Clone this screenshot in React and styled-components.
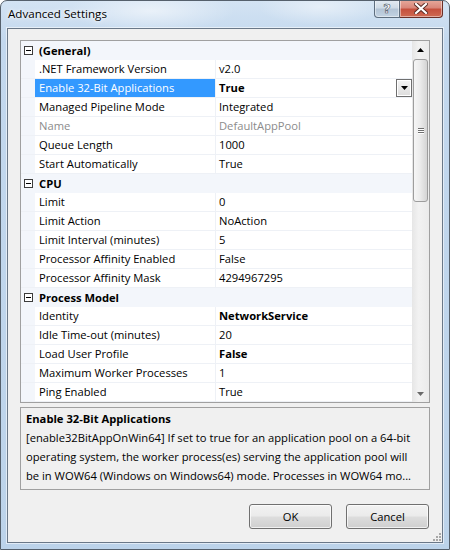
import styled, { createGlobalStyle } from 'styled-components'

const GlobalStyle = createGlobalStyle`
  html, body {
    margin: 0;
    padding: 0;
    background: #ffffff;
  }
  * {
    box-sizing: border-box;
  }
`

const FONT = `"Segoe UI", "Open Sans", "Liberation Sans", sans-serif`

const Window = styled.div`
  width: 450px;
  height: 550px;
  display: flex;
  flex-direction: column;
  border: 1px solid #55606c;
  border-radius: 7px 7px 0 0;
  padding: 0 6px 6px 6px;
  background:
    radial-gradient(ellipse 120px 30px at 150px 10px, rgba(255,255,255,0.55), rgba(255,255,255,0) 70%),
    radial-gradient(ellipse 90px 26px at 320px 6px, rgba(255,255,255,0.45), rgba(255,255,255,0) 70%),
    linear-gradient(180deg, #d3e3f3 0%, #c3d8ee 40px, #bcd3ea 100%);
  font-family: ${FONT};
  color: #000;
  overflow: hidden;
`

const TitleBar = styled.div`
  height: 27px;
  display: flex;
  justify-content: space-between;
  align-items: flex-start;
`

const Title = styled.div`
  padding: 5px 0 0 1px;
  font-size: 11.6px;
  line-height: 16px;
  text-shadow: 0 0 6px #ffffff, 0 0 3px #ffffff;
`

const CaptionButtons = styled.div`
  display: flex;
  margin-top: -1px;
`

const CaptionButton = styled.div`
  width: ${p => p.$w}px;
  height: 18px;
  display: flex;
  align-items: center;
  justify-content: center;
  border: 1px solid ${p => p.$close ? '#6b2f27' : '#5d6d7e'};
  border-top: none;
  border-left-width: ${p => p.$close ? 0 : 1}px;
  border-radius: ${p => p.$close ? '0 0 4px 0' : '0 0 0 4px'};
  background: ${p => p.$close
    ? 'linear-gradient(180deg, #e7aa9c 0%, #d9877a 45%, #c5503d 55%, #cf6a52 100%)'
    : 'linear-gradient(180deg, #e4ebf3 0%, #cfdbe7 45%, #b3c4d6 55%, #c2d2e2 100%)'};
  box-shadow: inset 0 0 0 1px rgba(255,255,255,0.45);
`

const HelpGlyph = styled.span`
  font-family: "DejaVu Sans", sans-serif;
  font-size: 13px;
  font-weight: bold;
  line-height: 1;
  color: #ffffff;
  -webkit-text-stroke: 0.6px #4a5664;
  margin-top: -1px;
`

const Client = styled.div`
  flex: 1;
  position: relative;
  display: flex;
  flex-direction: column;
  background: #f0f0f0;
  border: 1px solid #6a7888;
  box-shadow: 0 0 0 1px rgba(255,255,255,0.55);
  padding: 11px 12px 13px 12px;
`

const Grid = styled.div`
  height: 363px;
  display: flex;
  border: 1px solid #a0a0a0;
  background: #ffffff;
`

const Rows = styled.div`
  flex: 1;
  display: flex;
  flex-direction: column;
  overflow: hidden;
`

const Row = styled.div`
  height: 19px;
  flex: none;
  display: grid;
  grid-template-columns: 14px 181px 1fr;
  border-bottom: 1px solid #eef1f6;
  font-size: 11.2px;
  line-height: 18px;
`

const CategoryRow = styled.div`
  height: 19px;
  flex: none;
  display: flex;
  align-items: center;
  background: #f3f6fb;
  font-size: 11.2px;
  font-weight: bold;
  line-height: 18px;
`

const Expander = styled.div`
  width: 9px;
  height: 9px;
  margin: 0 6px 0 3px;
  border: 1px solid #3c3c3c;
  background: #ffffff;
  position: relative;
  &::after {
    content: '';
    position: absolute;
    left: 1px;
    right: 1px;
    top: 3px;
    height: 1px;
    background: #000;
  }
`

const Margin = styled.div`
  background: #f3f6fb;
`

const NameCell = styled.div`
  padding-left: 4px;
  white-space: nowrap;
  overflow: hidden;
  border-right: 1px solid #eef1f6;
  background: ${p => p.$selected ? '#3399ff' : '#ffffff'};
  color: ${p => p.$selected ? '#ffffff' : p.$disabled ? '#8c8c8c' : '#000000'};
`

const ValueCell = styled.div`
  display: flex;
  align-items: center;
  justify-content: space-between;
  padding-left: 3px;
  white-space: nowrap;
  overflow: hidden;
  font-weight: ${p => p.$bold ? 'bold' : 'normal'};
  color: ${p => p.$disabled ? '#8c8c8c' : '#000000'};
`

const DropButton = styled.div`
  width: 16px;
  height: 18px;
  display: flex;
  align-items: center;
  justify-content: center;
  border: 1px solid #6f6f6f;
  background: linear-gradient(180deg, #f4f4f4, #dcdcdc);
  box-shadow: inset 0 0 0 1px #ffffff;
`

const ScrollBar = styled.div`
  width: 17px;
  display: flex;
  flex-direction: column;
  background: linear-gradient(90deg, #e6e6e6, #f2f2f2 40%, #ebebeb);
`

const ScrollArrow = styled.div`
  height: 17px;
  flex: none;
  display: flex;
  align-items: center;
  justify-content: center;
`

const Thumb = styled.div`
  height: 143px;
  margin: 1px 1px 0 1px;
  display: flex;
  flex-direction: column;
  align-items: center;
  justify-content: center;
  gap: 1px;
  border: 1px solid #9d9d9d;
  border-radius: 3px;
  background: linear-gradient(90deg, #f6f6f6 0%, #ececec 45%, #d4d4d4 100%);
`

const GripLine = styled.div`
  width: 6px;
  height: 1px;
  background: #6e6e6e;
  box-shadow: 0 1px 0 #ffffff;
`

const Track = styled.div`
  flex: 1;
`

const Description = styled.div`
  margin-top: 4px;
  height: 83px;
  border: 1px solid #a0a0a0;
  padding: 1px 5px 0 5px;
  font-size: 11.2px;
  line-height: 19px;
  overflow: hidden;
`

const DescTitle = styled.div`
  font-weight: bold;
`

const DescLine = styled.div`
  white-space: nowrap;
  overflow: hidden;
`

const ButtonRow = styled.div`
  margin-top: auto;
  display: flex;
  justify-content: flex-end;
  gap: 14px;
  padding-right: 1px;
`

const Button = styled.button`
  width: 83px;
  height: 25px;
  padding: 0;
  font-family: ${FONT};
  font-size: 11.2px;
  color: #000;
  border: 1px solid #707070;
  border-radius: 3px;
  background: linear-gradient(180deg, #f2f2f2 0%, #ebebeb 48%, #dddddd 52%, #cfcfcf 100%);
  box-shadow: inset 0 0 0 1px rgba(255,255,255,0.7);
`

const Grip = styled.svg`
  position: absolute;
  right: 1px;
  bottom: 1px;
`

const sections = [
  {
    title: '(General)',
    rows: [
      { name: '.NET Framework Version', value: 'v2.0' },
      { name: 'Enable 32-Bit Applications', value: 'True', bold: true, selected: true, drop: true },
      { name: 'Managed Pipeline Mode', value: 'Integrated' },
      { name: 'Name', value: 'DefaultAppPool', disabled: true },
      { name: 'Queue Length', value: '1000' },
      { name: 'Start Automatically', value: 'True' },
    ],
  },
  {
    title: 'CPU',
    rows: [
      { name: 'Limit', value: '0' },
      { name: 'Limit Action', value: 'NoAction' },
      { name: 'Limit Interval (minutes)', value: '5' },
      { name: 'Processor Affinity Enabled', value: 'False' },
      { name: 'Processor Affinity Mask', value: '4294967295' },
    ],
  },
  {
    title: 'Process Model',
    rows: [
      { name: 'Identity', value: 'NetworkService', bold: true },
      { name: 'Idle Time-out (minutes)', value: '20' },
      { name: 'Load User Profile', value: 'False', bold: true },
      { name: 'Maximum Worker Processes', value: '1' },
      { name: 'Ping Enabled', value: 'True' },
    ],
  },
]

function Arrow({ down, color = '#000' }) {
  return (
    <svg width="7" height="4" viewBox="0 0 7 4">
      <path d={down ? 'M0 0h7L3.5 4z' : 'M0 4h7L3.5 0z'} fill={color} />
    </svg>
  )
}

export default function App() {
  return (
    <>
      <GlobalStyle />
      <Window>
        <TitleBar>
          <Title>Advanced Settings</Title>
          <CaptionButtons>
            <CaptionButton $w={26}>
              <HelpGlyph>?</HelpGlyph>
            </CaptionButton>
            <CaptionButton $w={43} $close>
              <svg width="14" height="11" viewBox="0 0 14 11">
                <path d="M2 1L12 10M12 1L2 10" stroke="#5a2a22" strokeWidth="4" strokeLinecap="square" />
                <path d="M2 1L12 10M12 1L2 10" stroke="#ffffff" strokeWidth="2.2" strokeLinecap="square" />
              </svg>
            </CaptionButton>
          </CaptionButtons>
        </TitleBar>
        <Client>
          <Grid>
            <Rows>
              {sections.map(s => (
                <div key={s.title} style={{ display: 'contents' }}>
                  <CategoryRow>
                    <Expander />
                    {s.title}
                  </CategoryRow>
                  {s.rows.map(r => (
                    <Row key={r.name}>
                      <Margin />
                      <NameCell $selected={r.selected} $disabled={r.disabled}>{r.name}</NameCell>
                      <ValueCell $bold={r.bold} $disabled={r.disabled}>
                        <span>{r.value}</span>
                        {r.drop && (
                          <DropButton>
                            <Arrow down />
                          </DropButton>
                        )}
                      </ValueCell>
                    </Row>
                  ))}
                </div>
              ))}
            </Rows>
            <ScrollBar>
              <ScrollArrow><Arrow /></ScrollArrow>
              <Thumb>
                <GripLine />
                <GripLine />
                <GripLine />
              </Thumb>
              <Track />
              <ScrollArrow><Arrow down color="#6a6a6a" /></ScrollArrow>
            </ScrollBar>
          </Grid>
          <Description>
            <DescTitle>Enable 32-Bit Applications</DescTitle>
            <DescLine>[enable32BitAppOnWin64] If set to true for an application pool on a 64-bit</DescLine>
            <DescLine>operating system, the worker process(es) serving the application pool will</DescLine>
            <DescLine>be in WOW64 (Windows on Windows64) mode. Processes in WOW64 mo...</DescLine>
          </Description>
          <ButtonRow>
            <Button>OK</Button>
            <Button>Cancel</Button>
          </ButtonRow>
          <Grip width="10" height="10" viewBox="0 0 10 10">
            {[[8, 2], [8, 5], [5, 5], [8, 8], [5, 8], [2, 8]].map(([x, y]) => (
              <rect key={`${x}-${y}`} x={x} y={y} width="2" height="2" fill="#a7a7a7" />
            ))}
          </Grip>
        </Client>
      </Window>
    </>
  )
}
